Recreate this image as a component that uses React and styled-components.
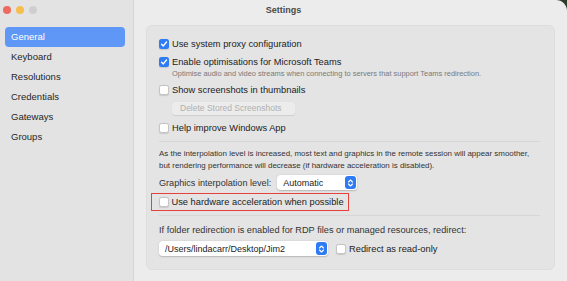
import React from 'react';
import styled, { createGlobalStyle } from 'styled-components';

const GlobalStyle = createGlobalStyle`
  html, body {
    margin: 0;
    padding: 0;
    background: #2f3a2a;
  }
  body {
    font-family: "Liberation Sans", Arial, sans-serif;
    -webkit-font-smoothing: antialiased;
  }
`;

const sidebarItems = ['General', 'Keyboard', 'Resolutions', 'Credentials', 'Gateways', 'Groups'];

// small check mark used for ticked boxes
const CheckMark = () => (
  <svg width="8" height="8" viewBox="0 0 8 8">
    <path d="M1.6 4.2 L3.3 5.9 L6.5 2" fill="none" stroke="#fff" strokeWidth="1.4" strokeLinecap="round" strokeLinejoin="round" />
  </svg>
);

// the blue up/down stepper at the end of a popup button
const Stepper = () => (
  <StepperBox>
    <svg width="7" height="10" viewBox="0 0 7 10">
      <path d="M1.5 4 L3.5 2 L5.5 4 M1.5 6 L3.5 8 L5.5 6" fill="none" stroke="#fff" strokeWidth="1.1" strokeLinecap="round" strokeLinejoin="round" />
    </svg>
  </StepperBox>
);

const Check = ({ checked }) => (
  <Box $checked={checked}>{checked && <CheckMark />}</Box>
);

const App = () => {
  return (
    <>
      <GlobalStyle />
      <Window>
        <Sidebar>
          <Lights>
            <Light $color="#ec6a5e" />
            <Light $color="#f4bf4f" />
            <Light $color="#cfcfcf" />
          </Lights>
          <NavList>
            {sidebarItems.map((item, i) => (
              <NavItem key={item} $active={i === 0}>{item}</NavItem>
            ))}
          </NavList>
        </Sidebar>
        <Main>
          <TitleBar>Settings</TitleBar>
          <Panel>
            <CheckRow>
              <Check checked />
              <Label>Use system proxy configuration</Label>
            </CheckRow>
            <CheckRow $top={4}>
              <Check checked />
              <Label>Enable optimisations for Microsoft Teams</Label>
            </CheckRow>
            <SubText>Optimise audio and video streams when connecting to servers that support Teams redirection.</SubText>
            <CheckRow $top={4}>
              <Check />
              <Label>Show screenshots in thumbnails</Label>
            </CheckRow>
            <DisabledButton>Delete Stored Screenshots</DisabledButton>
            <CheckRow $top={6}>
              <Check />
              <Label>Help improve Windows App</Label>
            </CheckRow>
            <Divider $top={6} />
            <Paragraph>
              As the interpolation level is increased, most text and graphics in the remote session will appear smoother,
              <br />
              but rendering performance will decrease (if hardware acceleration is disabled).
            </Paragraph>
            <FieldRow>
              <FieldLabel>Graphics interpolation level:</FieldLabel>
              <Popup $width={80}>
                <span>Automatic</span>
                <Stepper />
              </Popup>
            </FieldRow>
            <Highlight>
              <CheckRow>
                <Check />
                <Label>Use hardware acceleration when possible</Label>
              </CheckRow>
            </Highlight>
            <Divider $top={4} />
            <Caption>If folder redirection is enabled for RDP files or managed resources, redirect:</Caption>
            <FieldRow $top={5}>
              <Popup $width={169} $flush>
                <span>/Users/lindacarr/Desktop/Jim2</span>
                <Stepper />
              </Popup>
              <InlineCheck>
                <Check />
                <Label>Redirect as read-only</Label>
              </InlineCheck>
            </FieldRow>
          </Panel>
        </Main>
      </Window>
    </>
  );
};

const Window = styled.div`
  display: flex;
  width: 567px;
  height: 281px;
  overflow: hidden;
  border-top-right-radius: 11px;
  background: #ececec;
`;

const Sidebar = styled.div`
  width: 133px;
  flex-shrink: 0;
  background: #e3e3e3;
  border-right: 1px solid #d6d6d6;
  display: flex;
  flex-direction: column;
`;

const Lights = styled.div`
  display: flex;
  gap: 5px;
  padding: 6px 0 0 3px;
  height: 21px;
  box-sizing: border-box;
`;

const Light = styled.span`
  width: 8px;
  height: 8px;
  border-radius: 50%;
  background: ${p => p.$color};
`;

const NavList = styled.div`
  display: flex;
  flex-direction: column;
  padding: 6px 8px 0 5px;
`;

const NavItem = styled.div`
  height: 20px;
  line-height: 20px;
  padding-left: 6px;
  border-radius: 4px;
  font-size: 9.5px;
  color: ${p => (p.$active ? '#fff' : '#262626')};
  background: ${p => (p.$active ? '#5e97f6' : 'transparent')};
`;

const Main = styled.div`
  flex: 1;
  display: flex;
  flex-direction: column;
`;

/* title is centred on the whole window, so offset by the sidebar width */
const TitleBar = styled.div`
  height: 25px;
  line-height: 20px;
  text-align: center;
  font-size: 9px;
  font-weight: bold;
  color: #4a4a4a;
  padding-right: 134px;
  box-sizing: border-box;
`;

const Panel = styled.div`
  margin: 0 12px 11px 12px;
  flex: 1;
  background: #e4e4e4;
  border: 1px solid #dddddd;
  border-radius: 6px;
  padding: 11px 14px 0 12px;
  display: flex;
  flex-direction: column;
  align-items: flex-start;
`;

const CheckRow = styled.div`
  display: flex;
  align-items: center;
  height: 14px;
  margin-top: ${p => p.$top || 0}px;
`;

const InlineCheck = styled.div`
  display: flex;
  align-items: center;
  margin-left: 8px;
`;

const Box = styled.span`
  width: 10px;
  height: 10px;
  box-sizing: border-box;
  border-radius: 2.5px;
  display: flex;
  align-items: center;
  justify-content: center;
  background: ${p => (p.$checked ? '#2f7bf5' : '#ffffff')};
  border: ${p => (p.$checked ? 'none' : '0.5px solid #c4c4c4')};
  box-shadow: 0 0.5px 1px rgba(0, 0, 0, 0.12);
`;

const Label = styled.span`
  margin-left: 3px;
  font-size: 9.3px;
  color: #222;
  white-space: nowrap;
`;

const SubText = styled.div`
  margin-left: 13px;
  height: 10px;
  line-height: 10px;
  font-size: 7.45px;
  color: #7a7a7a;
  white-space: nowrap;
`;

const DisabledButton = styled.div`
  margin: 5px 0 0 13px;
  height: 13px;
  line-height: 13px;
  padding: 0 8px;
  border-radius: 3px;
  background: #ececec;
  box-shadow: 0 0.5px 1px rgba(0, 0, 0, 0.1);
  font-size: 8.5px;
  color: #b0b0b0;
  width: 107px;
`;

const Divider = styled.div`
  align-self: stretch;
  height: 1px;
  background: #d6d6d6;
  margin-top: ${p => p.$top}px;
`;

const Paragraph = styled.div`
  margin-top: 6px;
  font-size: 7.95px;
  line-height: 12px;
  color: #333;
  white-space: nowrap;
`;

const FieldRow = styled.div`
  display: flex;
  align-items: center;
  margin-top: ${p => (p.$top === undefined ? 3 : p.$top)}px;
`;

const FieldLabel = styled.span`
  font-size: 9.1px;
  color: #333;
  white-space: nowrap;
  line-height: 12px;
`;

const Caption = styled.div`
  margin-top: 8px;
  font-size: 9.2px;
  color: #333;
  white-space: nowrap;
  line-height: 12px;
`;

const Popup = styled.div`
  margin-left: ${p => (p.$flush ? 0 : 6)}px;
  width: ${p => p.$width}px;
  height: 15px;
  box-sizing: border-box;
  background: #fff;
  border-radius: 3.5px;
  box-shadow: 0 0.5px 1.5px rgba(0, 0, 0, 0.2);
  display: flex;
  align-items: center;
  justify-content: space-between;
  padding: 0 1px 0 6px;
  font-size: 9px;
  color: #222;
`;

const StepperBox = styled.span`
  width: 11px;
  height: 13px;
  border-radius: 3px;
  background: #2f7bf5;
  display: flex;
  align-items: center;
  justify-content: center;
`;

const Highlight = styled.div`
  margin: 3px 0 0 -8px;
  width: 198px;
  height: 18px;
  box-sizing: border-box;
  border: 1.5px solid #e8403a;
  padding-left: 6.5px;
  display: flex;
  align-items: center;
`;

export default App;
